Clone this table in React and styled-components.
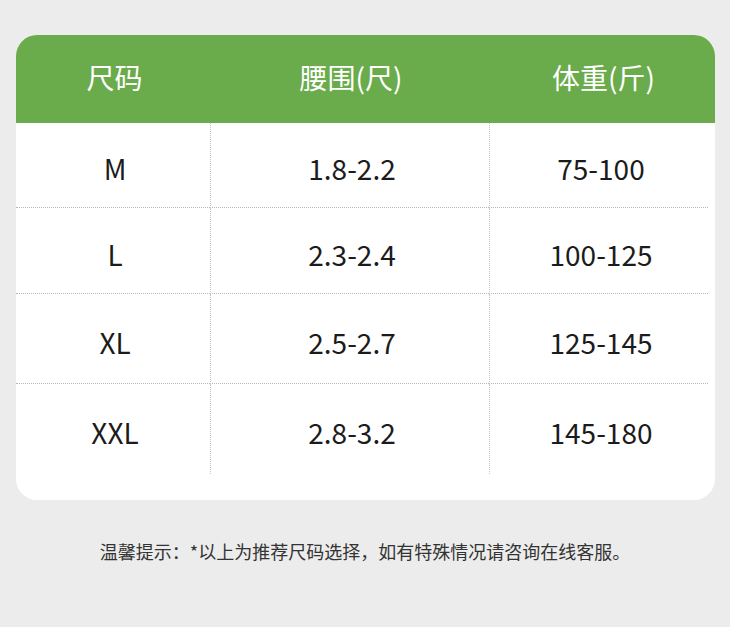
import React from "react";
import styled, { createGlobalStyle } from "styled-components";

const rows = [
  ["M", "1.8-2.2", "75-100"],
  ["L", "2.3-2.4", "100-125"],
  ["XL", "2.5-2.7", "125-145"],
  ["XXL", "2.8-3.2", "145-180"],
];

const heights = [85, 86, 90, 90];

const App = () => {
  return (
    <Page>
      <GlobalStyle />
      <Card>
        <Header>
          <HeadCell>尺码</HeadCell>
          <HeadCell>腰围(尺)</HeadCell>
          <HeadCell>体重(斤)</HeadCell>
        </Header>
        <Body>
          {rows.map((row, i) =>
            row.map((val, j) => (
              <Cell
                key={i + "-" + j}
                $h={heights[i]}
                $divider={j > 0}
                $last={i === rows.length - 1}
              >
                {val}
              </Cell>
            ))
          )}
        </Body>
      </Card>
      <Note>温馨提示：*以上为推荐尺码选择，如有特殊情况请咨询在线客服。</Note>
    </Page>
  );
};

export default App;

const GlobalStyle = createGlobalStyle`
  html, body {
    margin: 0;
    padding: 0;
    background: #ececec;
  }
  body {
    font-family: "Noto Sans CJK SC", "Noto Sans", sans-serif;
  }
`;

const Page = styled.div`
  width: 730px;
  height: 627px;
  background: #ececec;
  padding-top: 35px;
  box-sizing: border-box;
  overflow: hidden;
`;

const Card = styled.div`
  margin-left: 16px;
  width: 699px;
  background: #ffffff;
  border-radius: 21px;
  overflow: hidden;
  padding-bottom: 26px;
`;

const Header = styled.div`
  display: grid;
  grid-template-columns: 194px 279px 1fr;
  height: 88px;
  background: #6aab4b;
`;

const HeadCell = styled.div`
  display: flex;
  align-items: center;
  justify-content: center;
  color: #ffffff;
  font-size: 28px;
  padding: 0 0 4px 3px;
`;

const Body = styled.div`
  display: grid;
  grid-template-columns: 194px 279px 1fr;
  margin-right: 7px;
`;

const Cell = styled.div`
  height: ${(p) => p.$h}px;
  box-sizing: border-box;
  display: flex;
  align-items: center;
  justify-content: center;
  padding: 6px 0 0 4px;
  font-size: 28px;
  color: #1b1b1b;
  border-bottom: ${(p) => (p.$last ? "none" : "1px dotted #b8b8b8")};
  border-left: ${(p) => (p.$divider ? "1px dotted #c4c4c4" : "none")};
`;

const Note = styled.p`
  margin: 38px 0 0;
  text-align: center;
  font-size: 18px;
  color: #333333;
`;
